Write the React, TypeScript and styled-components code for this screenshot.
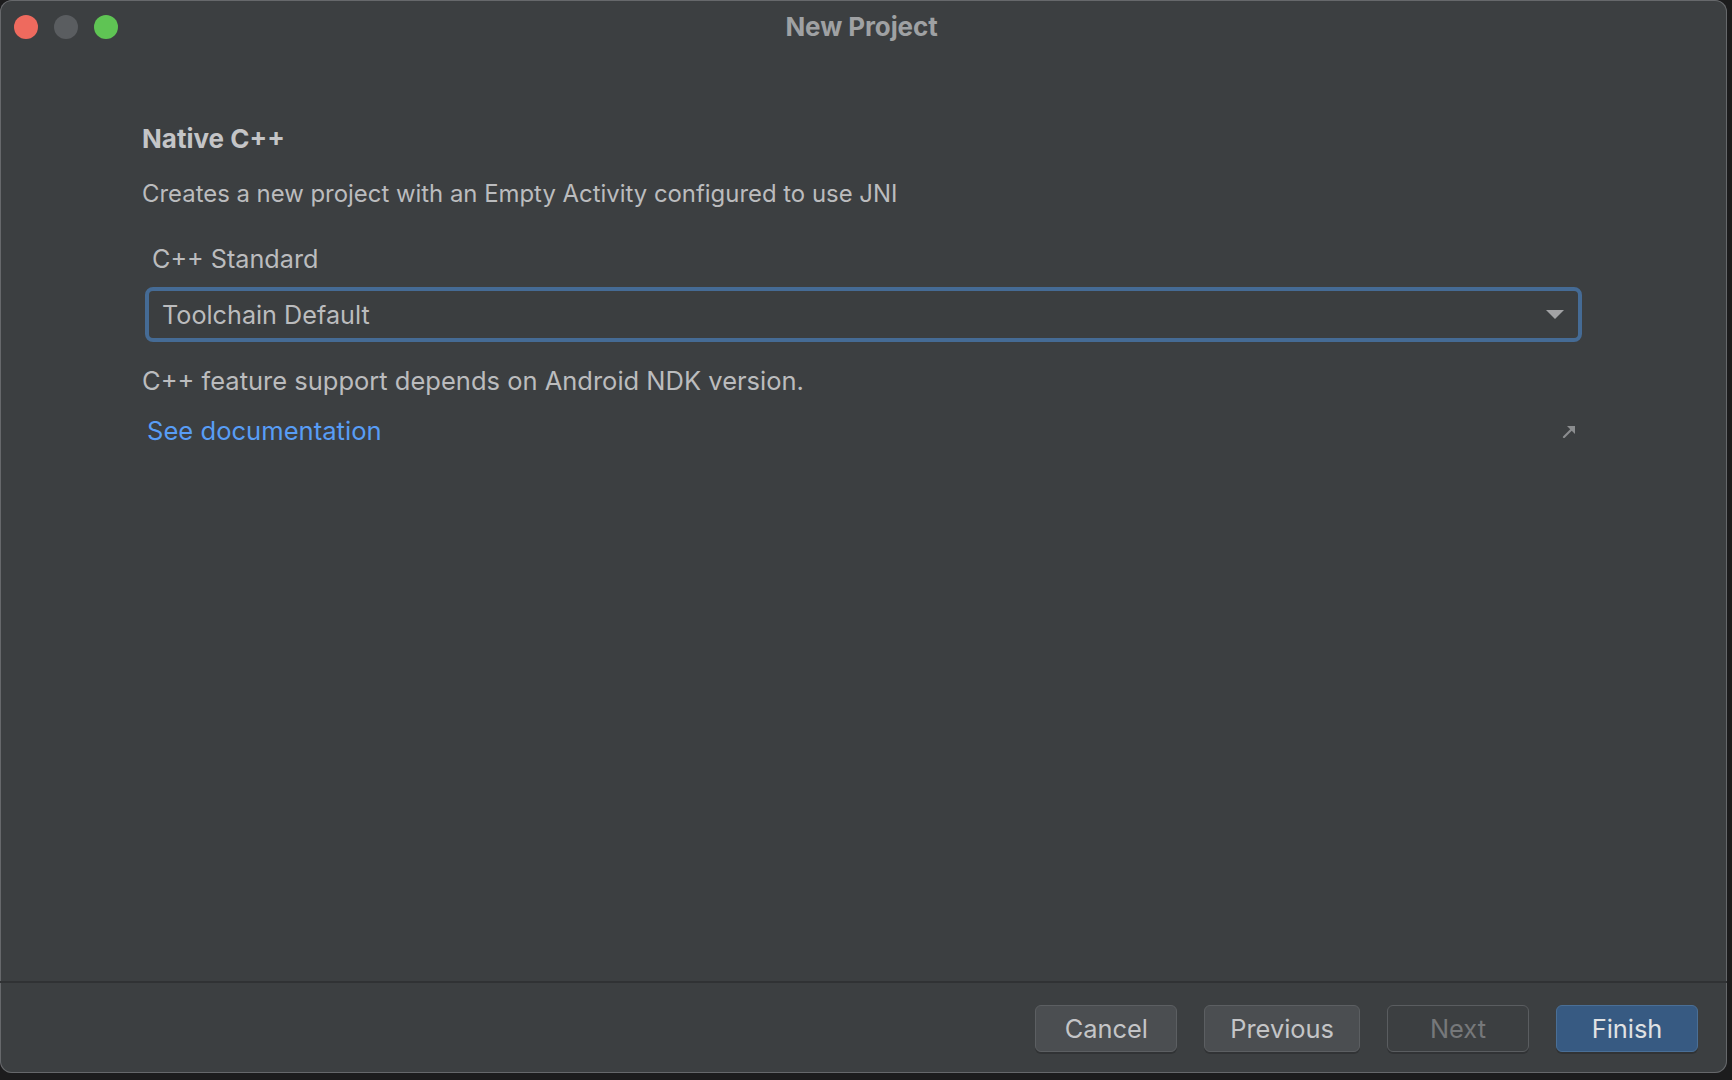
import React from "react";
import styled, { createGlobalStyle } from "styled-components";

const GlobalStyle = createGlobalStyle`
  html, body {
    margin: 0;
    padding: 0;
    background: #1c1c1d;
  }
  body {
    font-family: Inter, "Noto Sans", "Liberation Sans", sans-serif;
    -webkit-font-smoothing: antialiased;
  }
  * { box-sizing: border-box; }
`;

const Window = styled.div`
  width: 1727px;
  height: 1073px;
  background: #3c3f41;
  border-radius: 12px;
  box-shadow: inset 0 0 0 1px #66686b;
  display: flex;
  flex-direction: column;
  overflow: hidden;
`;

const TitleBar = styled.div`
  height: 54px;
  flex: none;
  display: grid;
  grid-template-columns: 1fr auto 1fr;
  align-items: center;
  padding: 0 14px;
`;

const Lights = styled.div`
  display: flex;
  gap: 16px;
  align-items: center;
`;

const Light = styled.span<{ $color: string }>`
  width: 24px;
  height: 24px;
  border-radius: 50%;
  background: ${(p) => p.$color};
`;

const Title = styled.div`
  font-size: 26px;
  font-weight: 700;
  color: #9fa1a3;
  line-height: 32px;
  letter-spacing: -0.1px;
  margin-left: -4px;
`;

const Content = styled.main`
  flex: 1;
  padding: 70px 145px 0 142px;
  display: flex;
  flex-direction: column;
`;

const Heading = styled.h1`
  margin: 0;
  font-size: 26px;
  font-weight: 700;
  line-height: 30px;
  color: #c4c5c7;
`;

const Text = styled.p<{ $top: number; $size: number }>`
  margin: ${(p) => p.$top}px 0 0;
  font-size: ${(p) => p.$size}px;
  line-height: 30px;
  color: #bbbcbe;
`;

const Label = styled.label`
  margin: 35px 0 0 10px;
  font-size: 25.2px;
  line-height: 30px;
  color: #bbbcbe;
`;

const Select = styled.div`
  margin: 13px 0 0 3px;
  height: 55px;
  border: 4px solid #456b95;
  border-radius: 8px;
  background: #3b3e40;
  display: flex;
  align-items: center;
  justify-content: space-between;
  padding: 0 14px 0 13px;
  font-size: 25.2px;
  color: #bbbcbe;
`;

const Caret = styled.span`
  width: 0;
  height: 0;
  border-left: 9px solid transparent;
  border-right: 9px solid transparent;
  border-top: 9px solid #a2a3a5;
`;

const LinkRow = styled.div`
  margin: 20px 6px 0 5px;
  display: flex;
  align-items: center;
  justify-content: space-between;
`;

const Link = styled.a`
  font-size: 25.6px;
  line-height: 30px;
  color: #589df6;
  text-decoration: none;
`;

const Footer = styled.footer`
  height: 92px;
  flex: none;
  border-top: 2px solid #303234;
  display: flex;
  justify-content: flex-end;
  align-items: center;
  gap: 27px;
  padding: 0 29px 0 0;
`;

const Button = styled.button<{ $variant?: "primary" | "disabled" }>`
  height: 47px;
  min-width: 142px;
  padding: 0 25px;
  border-radius: 6px;
  font-family: inherit;
  font-size: 25.4px;
  border: 1px solid
    ${(p) =>
      p.$variant === "primary"
        ? "#4a6f96"
        : p.$variant === "disabled"
        ? "#5a5d60"
        : "#5c5f62"};
  background: ${(p) =>
    p.$variant === "primary"
      ? "#375a82"
      : p.$variant === "disabled"
      ? "#3c3f41"
      : "#4b4e51"};
  color: ${(p) =>
    p.$variant === "primary"
      ? "#e0e2e4"
      : p.$variant === "disabled"
      ? "#76787a"
      : "#c4c5c7"};
  box-shadow: 0 2px 0 rgba(0, 0, 0, 0.18);
`;

const ExternalIcon = () => (
  <svg width="14" height="13" viewBox="0 0 14 13">
    <path d="M2 12 L9 5" stroke="#8b8d8f" strokeWidth="2.2" strokeLinecap="round" />
    <path d="M5 1 L13 1 L13 9 Z" fill="#8b8d8f" />
  </svg>
);

export default function App() {
  return (
    <>
      <GlobalStyle />
      <Window>
        <TitleBar>
          <Lights>
            <Light $color="#ee6a5e" />
            <Light $color="#5a5d60" />
            <Light $color="#5fc454" />
          </Lights>
          <Title>New Project</Title>
          <div />
        </TitleBar>
        <Content>
          <Heading>Native C++</Heading>
          <Text $top={25} $size={23.9}>
            Creates a new project with an Empty Activity configured to use JNI
          </Text>
          <Label>C++ Standard</Label>
          <Select>
            <span>Toolchain Default</span>
            <Caret />
          </Select>
          <Text $top={24} $size={25.5}>
            C++ feature support depends on Android NDK version.
          </Text>
          <LinkRow>
            <Link href="#">See documentation</Link>
            <ExternalIcon />
          </LinkRow>
        </Content>
        <Footer>
          <Button>Cancel</Button>
          <Button>Previous</Button>
          <Button $variant="disabled">Next</Button>
          <Button $variant="primary">Finish</Button>
        </Footer>
      </Window>
    </>
  );
}
